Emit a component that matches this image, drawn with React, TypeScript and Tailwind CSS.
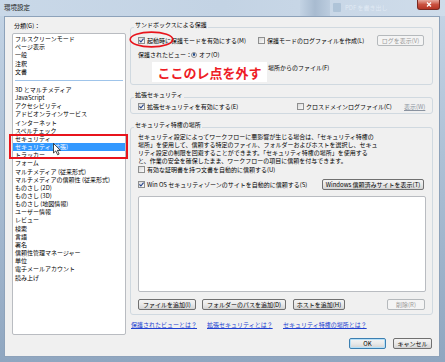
import type { ReactNode } from "react";

const topItems = ["フルスクリーンモード", "ページ表示", "一般", "注釈", "文書"];
const restItems = [
  "3D とマルチメディア",
  "JavaScript",
  "アクセシビリティ",
  "アドビオンラインサービス",
  "インターネット",
  "スペルチェック",
  "セキュリティ",
  "セキュリティ (拡張)",
  "トラッカー",
  "フォーム",
  "マルチメディア (従来形式)",
  "マルチメディアの信頼性 (従来形式)",
  "ものさし (2D)",
  "ものさし (3D)",
  "ものさし (地図情報)",
  "ユーザー情報",
  "レビュー",
  "検索",
  "言語",
  "署名",
  "信頼性管理マネージャー",
  "単位",
  "電子メールアカウント",
  "読み上げ",
];

function Check({ checked }: { checked?: boolean }) {
  return (
    <span className="w-[7px] h-[7px] shrink-0 border border-[#8e8f8f] bg-gradient-to-br from-[#d9d9d9] to-[#fbfbfb] flex items-center justify-center">
      {checked && (
        <svg width="5" height="5" viewBox="0 0 5 5">
          <path d="M0.4 2.4 L1.9 4 L4.6 0.7" stroke="#22408a" strokeWidth="1.1" fill="none" />
        </svg>
      )}
    </span>
  );
}

function Radio({ on }: { on?: boolean }) {
  return (
    <span className="w-[6px] h-[6px] shrink-0 rounded-full border border-[#8e8f8f] bg-gradient-to-br from-[#dcdcdc] to-[#fafafa] flex items-center justify-center">
      {on && <span className="w-[2.5px] h-[2.5px] rounded-full bg-[#1f4a8c]" />}
    </span>
  );
}

function Btn({ children, className, disabled }: { children: ReactNode; className: string; disabled?: boolean }) {
  return (
    <div
      className={
        "h-[11px] shrink-0 rounded-[2px] border flex items-center justify-center leading-none whitespace-nowrap " +
        (disabled
          ? "border-[#b5b9bc] bg-[#f4f4f4] text-[#9a9a9a] "
          : "border-[#707070] bg-gradient-to-b from-[#f4f4f4] via-[#e9e9e9] to-[#d4d4d4] ") +
        className
      }
    >
      {children}
    </div>
  );
}

function Group({ label, className, children }: { label: string; className: string; children: ReactNode }) {
  return (
    <div className={"relative border border-[#d0d9e0] rounded-[3px] " + className}>
      <span className="absolute top-[-7px] left-[3px] px-[1px] bg-[#f0f0f0] leading-[8px] whitespace-nowrap">{label}</span>
      {children}
    </div>
  );
}

function TitleBar() {
  return (
    <div className="h-[16px] shrink-0 flex items-start pr-[5px] bg-gradient-to-r from-[#c9d8e8] via-[#c3d3e4] to-[#cfdcea]">
      <span className="pl-[4px] pt-[3px] text-[6.5px] leading-[8px] text-[#222]">環境設定</span>
      <div className="ml-auto w-[140px] h-full flex items-start">
        <div className="w-[30px] h-full bg-gradient-to-r from-[#c3d3e4] via-[#a8bbd0] to-[#bccddf]" />
        <div className="ml-[3px] mt-[3px] w-[8px] h-[9px] rounded-[1px] bg-[#a9bfd5] opacity-80" />
        <span className="ml-[4px] pt-[4px] text-[6px] leading-[7px] text-[#e6eef7] opacity-80 whitespace-nowrap">PDF を書き出し</span>
        <div className="ml-auto w-[23px] h-[10px] rounded-b-[3px] border border-t-0 border-[#7a2a22] bg-gradient-to-b from-[#e6a99f] via-[#c9503f] to-[#b63424] flex items-center justify-center">
          <svg width="6" height="5" viewBox="0 0 6 5">
            <path d="M1 0.5 L5 4.5 M5 0.5 L1 4.5" stroke="#fff" strokeWidth="1.3" />
          </svg>
        </div>
      </div>
    </div>
  );
}

export default function App() {
  return (
    <div className="relative w-[445px] h-[362px] overflow-hidden flex flex-col bg-gradient-to-b from-[#c5d5e6] to-[#8fa6c0] font-['Noto_Sans_CJK_JP','Noto_Sans',sans-serif] text-[6px] text-black">
      <TitleBar />
      <div className="flex-1 flex pl-[4px] pr-[5px] pb-[5px]">
        <div className="flex-1 flex bg-[#f0f0f0] border border-[#8da2ba] pl-[7px]">
          {/* category list */}
          <div className="w-[114px] pt-[4px] flex flex-col">
            <div className="h-[9px] leading-[9px] pl-[2px]">分類(G)：</div>
            <div className="mt-[3px] h-[302px] bg-white border border-[#b9bcc1] rounded-[2px] pt-[1px] overflow-hidden">
              {topItems.map((t) => (
                <div key={t} className="h-[8.2px] leading-[8.2px] pl-[2px] whitespace-nowrap">{t}</div>
              ))}
              <div className="h-[10px] flex items-center px-[2px]">
                <div className="h-px w-full bg-[#9fc4ea]" />
              </div>
              {restItems.map((t) => (
                <div
                  key={t}
                  className={
                    "h-[8.17px] leading-[8.17px] pl-[2px] whitespace-nowrap " +
                    (t === "セキュリティ (拡張)" ? "bg-[#3399ff] text-white" : "")
                  }
                >
                  {t}
                </div>
              ))}
            </div>
          </div>

          {/* settings */}
          <div className="ml-[4px] w-[303px] pt-[10px] flex flex-col">
            <Group label="サンドボックスによる保護" className="h-[58px] pt-[8px] pl-[7px]">
              <div className="h-[9px] flex items-center">
                <div className="w-[120px] flex items-center gap-[2px] whitespace-nowrap">
                  <Check checked />
                  <span>起動時に保護モードを有効にする(M)</span>
                </div>
                <div className="w-[119px] flex items-center gap-[2px] whitespace-nowrap">
                  <Check />
                  <span>保護モードのログファイルを作成(L)</span>
                </div>
                <Btn disabled className="w-[47px]">ログを表示(V)</Btn>
              </div>
              <div className="mt-[5px] h-[9px] flex items-center">
                <span className="w-[53px] whitespace-nowrap">保護されたビュー：</span>
                <Radio on />
                <span className="ml-[2px]">オフ(O)</span>
              </div>
              <div className="mt-[4px] h-[9px] flex items-center">
                <span className="w-[130px]" />
                <span className="whitespace-nowrap">場所からのファイル(F)</span>
              </div>
            </Group>

            <Group label="拡張セキュリティ" className="mt-[12px] h-[17px] pt-[4px] pl-[7px]">
              <div className="h-[9px] flex items-center">
                <div className="w-[159px] flex items-center gap-[2px] whitespace-nowrap">
                  <Check checked />
                  <span>拡張セキュリティを有効にする(E)</span>
                </div>
                <div className="w-[107px] flex items-center gap-[2px] whitespace-nowrap">
                  <Check />
                  <span>クロスドメインログファイル(C)</span>
                </div>
                <span className="text-[#8a93a0] underline">表示(W)</span>
              </div>
            </Group>

            <Group label="セキュリティ特権の場所" className="mt-[13px] h-[188px] pt-[5px] pl-[7px]">
              <div className="leading-[8px] whitespace-nowrap">
                <div>セキュリティ設定によってワークフローに悪影響が生じる場合は、「セキュリティ特権の</div>
                <div>場所」を使用して、信頼する特定のファイル、フォルダーおよびホストを選択し、セキュ</div>
                <div>リティ設定の制限を回避することができます。「セキュリティ特権の場所」を使用する</div>
                <div>と、作業の安全を確保したまま、ワークフローの項目に信頼を付与できます。</div>
              </div>
              <div className="h-[9px] flex items-center gap-[2px] whitespace-nowrap">
                <Check />
                <span>有効な証明書を持つ文書を自動的に信頼する(U)</span>
              </div>
              <div className="mt-[5px] h-[11px] flex items-center">
                <div className="w-[184px] flex items-center gap-[2px] whitespace-nowrap">
                  <Check checked />
                  <span>Win OS セキュリティゾーンのサイトを自動的に信頼する(S)</span>
                </div>
                <Btn className="w-[102px]">Windows 信頼済みサイトを表示(T)</Btn>
              </div>
              <div className="mt-[6px] w-[288px] h-[96px] bg-white border border-[#b9bcc1] rounded-[2px]" />
              <div className="mt-[7px] flex items-center">
                <Btn className="w-[58px]">ファイルを追加(I)</Btn>
                <Btn className="ml-[6px] w-[84px]">フォルダーのパスを追加(D)</Btn>
                <Btn className="ml-[7px] w-[52px]">ホストを追加(H)</Btn>
                <Btn disabled className="ml-[42px] w-[38px]">削除(R)</Btn>
              </div>
            </Group>

            <div className="mt-[5px] h-[9px] pl-[1px] flex items-center text-[#2040d0] whitespace-nowrap">
              <span className="w-[76px] underline">保護されたビューとは？</span>
              <span className="w-[76px] underline">拡張セキュリティとは？</span>
              <span className="underline">セキュリティ特権の場所とは？</span>
            </div>

            <div className="mt-[9px] flex justify-end gap-[7px] pr-[1px]">
              <Btn className="w-[37px] !border-[#3c7fb1] shadow-[inset_0_0_0_1px_#b7e0f7]">OK</Btn>
              <Btn className="w-[39px]">キャンセル</Btn>
            </div>
          </div>
        </div>
      </div>

      {/* annotations drawn over the screenshot */}
      <div className="absolute left-[9px] top-[134px] w-[119px] h-[25px] border-2 border-[#e8141c]" />
      <svg className="absolute left-[129px] top-[31px]" width="45" height="17" viewBox="0 0 45 17">
        <ellipse cx="22.5" cy="8.5" rx="21.3" ry="7.4" fill="none" stroke="#e8141c" strokeWidth="1.6" />
      </svg>
      <div className="absolute left-[152px] top-[62px] w-[115px] h-[20px] bg-white flex items-center justify-center text-[13px] font-bold leading-none text-[#ee1c25] whitespace-nowrap">
        ここのレ点を外す
      </div>
      <svg className="absolute left-[53px] top-[143px]" width="9" height="13" viewBox="0 0 9 13">
        <path d="M0.5 0.5 L0.5 10 L2.8 7.9 L4.6 11.8 L6.1 11.1 L4.4 7.3 L7.4 7.3 Z" fill="#fff" stroke="#000" strokeWidth="0.7" />
      </svg>
    </div>
  );
}
